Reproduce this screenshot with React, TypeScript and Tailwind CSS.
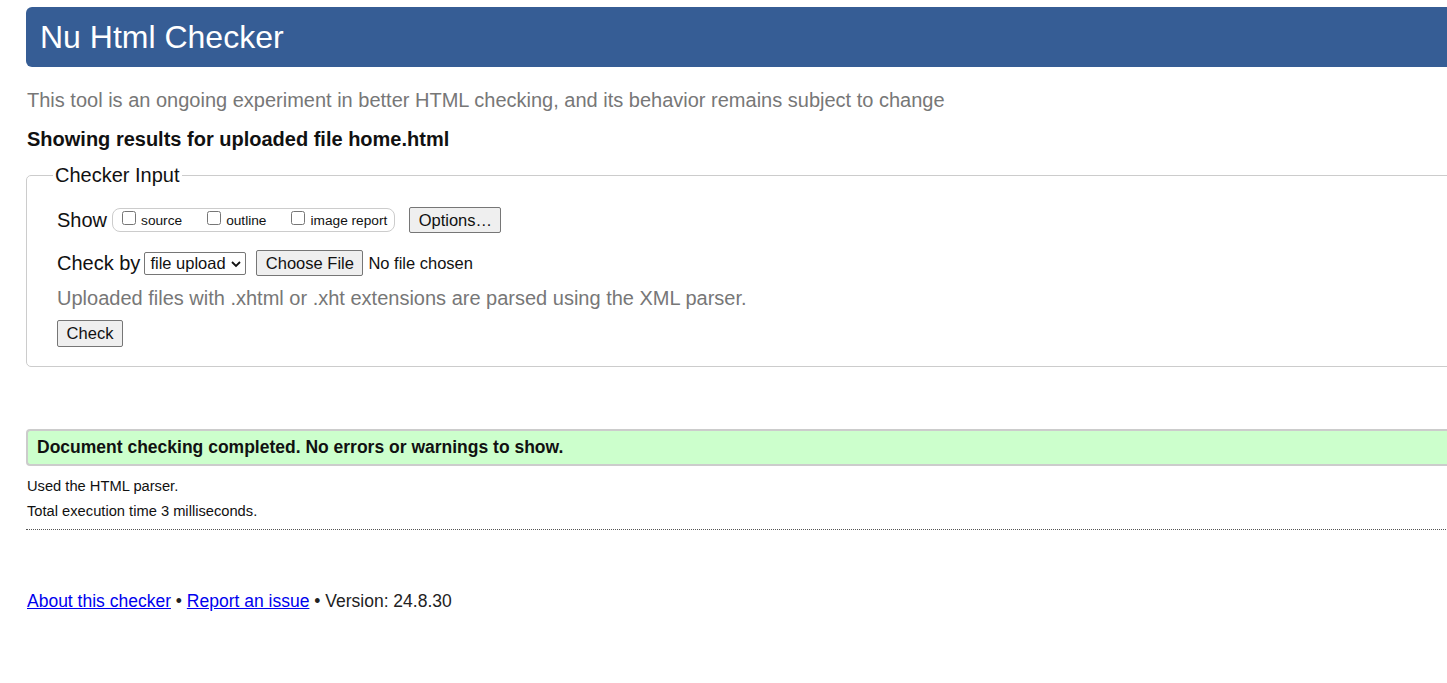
export default function App() {
  return (
    <div className="w-full min-h-[683px] overflow-hidden bg-white font-['Liberation_Sans',Arial,sans-serif] text-[#111]">
      <div className="w-[1500px] pl-[26px] pt-[7px]">
        {/* Header */}
        <div className="h-[60px] bg-[#365d95] rounded-l-[6px] flex items-center pl-[14px]">
          <h1 className="text-[32px] text-white leading-none">Nu Html Checker</h1>
        </div>

        <p className="mt-[22px] ml-[1px] text-[20px] text-[#777] leading-[22px]">
          This tool is an ongoing experiment in better HTML checking, and its behavior remains subject to change
        </p>
        <h2 className="mt-[17px] ml-[1px] text-[20px] font-bold leading-[22px]">Showing results for uploaded file home.html</h2>

        {/* Checker Input */}
        <fieldset className="mt-[14px] border border-[#ccc] rounded-l-[5px] pl-[30px] pb-[19px] pt-[4px]">
          <legend className="ml-[-4px] px-[2px] text-[20px] leading-[22px]">Checker Input</legend>

          <div className="flex items-center mt-[15px]">
            <span className="text-[20px] mr-[5px]">Show</span>
            <div className="flex items-center border border-[#ccc] rounded-[8px] h-[24px] pl-[9px] pr-[7px] text-[13.7px]">
              <label className="flex items-center mr-[25px]">
                <input type="checkbox" className="m-0 mr-[5px] w-[14px] h-[14px] mt-[-4px]" />
                <span className="mt-[3px]">source</span>
              </label>
              <label className="flex items-center mr-[25px]">
                <input type="checkbox" className="m-0 mr-[5px] w-[14px] h-[14px] mt-[-4px]" />
                <span className="mt-[3px]">outline</span>
              </label>
              <label className="flex items-center">
                <input type="checkbox" className="m-0 mr-[5px] w-[14px] h-[14px] mt-[-4px]" />
                <span className="mt-[3px]">image report</span>
              </label>
            </div>
            <button className="ml-[14px] h-[26px] w-[92px] text-[16.5px] bg-[#efefef] border border-[#767676] rounded-[2px]">
              Options…
            </button>
          </div>

          <div className="flex items-center mt-[13px]">
            <span className="text-[20px] mr-[4px]">Check by</span>
            <div className="relative h-[23px] w-[102px] border border-[#767676] rounded-[2px] text-[16.5px] flex items-center pl-[5px]">
              file upload
              <svg className="absolute right-[4px] top-[7px]" width="10" height="8" viewBox="0 0 10 8">
                <path d="M1 2 L5 6 L9 2" stroke="#111" strokeWidth="1.8" fill="none" />
              </svg>
            </div>
            <button className="ml-[10px] h-[26px] w-[107px] text-[16.5px] bg-[#efefef] border border-[#767676] rounded-[2px]">
              Choose File
            </button>
            <span className="ml-[5px] text-[16.5px]">No file chosen</span>
          </div>

          <p className="mt-[9px] text-[20px] text-[#777] leading-[23px]">
            Uploaded files with .xhtml or .xht extensions are parsed using the XML parser.
          </p>

          <button className="mt-[10px] h-[27px] w-[66px] text-[16.5px] bg-[#efefef] border border-[#767676] rounded-[2px]">
            Check
          </button>
        </fieldset>

        {/* Result */}
        <div className="mt-[62px] h-[37px] bg-[#ccffcc] border-y-2 border-l-2 border-[#ccc] rounded-l-[4px] flex items-center pl-[9px]">
          <span className="text-[17.5px] font-bold">Document checking completed. No errors or warnings to show.</span>
        </div>

        <p className="mt-[12px] ml-[1px] text-[14.7px] leading-[17px]">Used the HTML parser.</p>
        <p className="mt-[8px] ml-[1px] text-[14.7px] leading-[17px]">Total execution time 3 milliseconds.</p>
        <div className="mt-[9px] border-t border-dotted border-[#555]" />

        {/* Footer */}
        <p className="mt-[58px] ml-[1px] text-[17.5px] text-[#222]">
          <a href="#" className="text-[#0000ee] underline">About this checker</a>
          {' • '}
          <a href="#" className="text-[#0000ee] underline">Report an issue</a>
          {' • Version: 24.8.30'}
        </p>
      </div>
    </div>
  );
}
